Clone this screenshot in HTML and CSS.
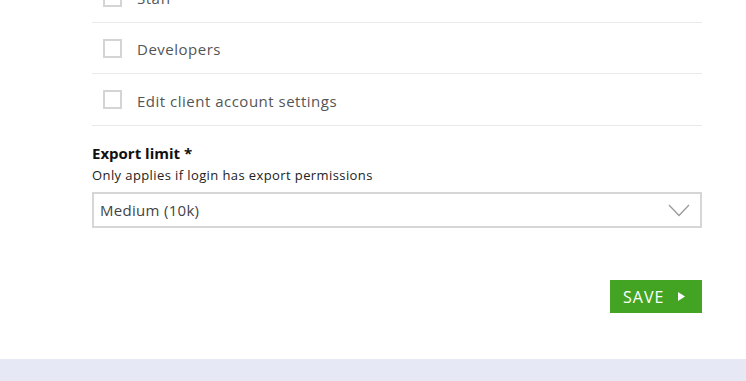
FILE: index.html
```html
<!DOCTYPE html>
<html>
<head>
<meta charset="utf-8">
<link rel="stylesheet" href="styles.css">
</head>
<body>
<main class="page">
  <form class="form">
    <ul class="perms">
      <li class="perm"><span class="box"></span><span class="perm-label">Staff</span></li>
      <li class="perm"><span class="box"></span><span class="perm-label">Developers</span></li>
      <li class="perm"><span class="box"></span><span class="perm-label">Edit client account settings</span></li>
    </ul>
    <div class="field">
      <div class="field-label">Export limit *</div>
      <div class="field-help">Only applies if login has export permissions</div>
      <div class="select">
        <span class="select-value">Medium (10k)</span>
        <svg class="chev" width="22" height="13" viewBox="0 0 22 13"><polyline points="1,1 11,11.5 21,1" fill="none" stroke="#9a9a9a" stroke-width="1.3"/></svg>
      </div>
    </div>
    <div class="actions">
      <button type="button" class="save">SAVE <svg class="tri" width="7" height="9" viewBox="0 0 7 9"><polygon points="0,0 7,4.5 0,9" fill="#fff"/></svg></button>
    </div>
  </form>
</main>
<footer class="footer"></footer>
</body>
</html>
```
FILE: styles.css
```css
html, body {
  margin: 0;
  padding: 0;
  background: #fff;
  font-family: "Open Sans", "Lato", sans-serif;
  overflow: hidden;
}
.page {
  height: 359px;
  overflow: hidden;
}
.form {
  margin: -28px 0 0 92px;
  width: 610px;
}
.perms {
  list-style: none;
  margin: 0;
  padding: 0;
}
.perm {
  display: flex;
  align-items: center;
  height: 50px;
  padding-left: 11px;
  border-bottom: 1px solid #e9e9e9;
  box-sizing: content-box;
}
.perm:nth-child(3) { height: 51px; }
.box {
  width: 15px;
  height: 15px;
  border: 2px solid #d4d4d4;
  background: #fff;
  flex: none;
}
.perm-label {
  margin-left: 15px;
  font-size: 15px;
  color: #555;
  letter-spacing: 0.5px;
  padding-top: 2px;
}
.field {
  padding-top: 17px;
}
.field-label {
  font-size: 15px;
  font-weight: 700;
  color: #111;
  line-height: 20px;
}
.field-help {
  font-size: 13px;
  color: #222;
  line-height: 20px;
  margin-top: 2px;
  letter-spacing: 0.4px;
}
.select {
  margin-top: 7px;
  height: 32px;
  border: 2px solid #d6d6d6;
  display: flex;
  align-items: center;
  justify-content: space-between;
  padding: 0 10px 0 6px;
}
.select-value {
  font-size: 15px;
  color: #444;
  letter-spacing: 0.3px;
}
.chev {
  display: block;
}
.actions {
  display: flex;
  justify-content: flex-end;
  margin-top: 52px;
}
.save {
  width: 92px;
  height: 33px;
  background: #43a423;
  border: none;
  border-radius: 0;
  color: #fff;
  font-family: inherit;
  font-size: 16px;
  letter-spacing: 1px;
  display: flex;
  align-items: center;
  padding: 0 0 0 13px;
  cursor: pointer;
}
.tri {
  margin-left: 14px;
}
.footer {
  height: 22px;
  background: #e6e9f5;
}
```
